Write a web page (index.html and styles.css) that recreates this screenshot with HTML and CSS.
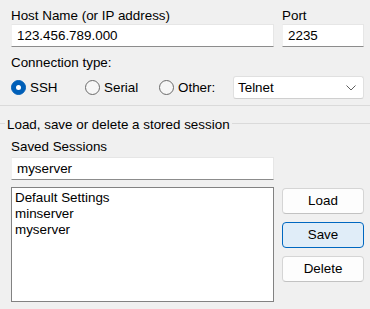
FILE: index.html
```html
<!DOCTYPE html>
<html>
<head>
<meta charset="utf-8">
<link rel="stylesheet" href="styles.css">
</head>
<body>
<div class="panel">
  <div class="dest">
    <div class="field">
      <div class="label">Host Name (or IP address)</div>
      <div class="input">123.456.789.000</div>
    </div>
    <div class="field">
      <div class="label">Port</div>
      <div class="input">2235</div>
    </div>
  </div>
  <div class="label conn-label">Connection type:</div>
  <div class="conn-row">
    <div class="radio-item"><span class="radio checked"></span><span>SSH</span></div>
    <div class="radio-item"><span class="radio"></span><span>Serial</span></div>
    <div class="radio-item other"><span class="radio"></span><span>Other:</span></div>
    <div class="select">
      <span>Telnet</span>
      <svg class="chev" width="10" height="6" viewBox="0 0 10 6"><polyline points="0.5,0.5 5,5 9.5,0.5" fill="none" stroke="#5f5f5f" stroke-width="1"/></svg>
    </div>
  </div>
</div>
<div class="sep"></div>
<div class="group-head">
  <span class="gline short"></span>
  <span class="gtext">Load, save or delete a stored session</span>
  <span class="gline long"></span>
</div>
<div class="panel sessions">
  <div class="label">Saved Sessions</div>
  <div class="input sess-input">myserver</div>
  <div class="sess-row">
    <div class="list">
      <div class="item">Default Settings</div>
      <div class="item">minserver</div>
      <div class="item">myserver</div>
    </div>
    <div class="buttons">
      <div class="btn">Load</div>
      <div class="btn primary">Save</div>
      <div class="btn">Delete</div>
    </div>
  </div>
</div>
</body>
</html>
```
FILE: styles.css
```css
html, body {
  margin: 0;
  padding: 0;
  background: #f0f0f0;
}
body {
  font-family: "Liberation Sans", Arial, sans-serif;
  font-size: 13.4px;
  line-height: 16px;
  color: #000;
  width: 370px;
  height: 309px;
  overflow: hidden;
}
.panel {
  padding: 8px 6px 0 11px;
}
.dest {
  display: grid;
  grid-template-columns: 263px 82px;
  column-gap: 8px;
}
.label {
  height: 16px;
  white-space: nowrap;
}
.input {
  box-sizing: border-box;
  height: 23px;
  background: #fff;
  border: 1px solid #e6e6e6;
  border-left-color: #f0f0f0;
  border-bottom-color: #8c8c8c;
  padding: 2px 5px;
  line-height: 17px;
  white-space: nowrap;
}
.conn-label {
  margin-top: 8px;
}
.conn-row {
  margin-top: 5px;
  display: flex;
  align-items: center;
  height: 23px;
}
.radio-item {
  display: flex;
  align-items: center;
  width: 74px;
  flex: none;
}
.radio {
  box-sizing: border-box;
  width: 15px;
  height: 15px;
  border-radius: 50%;
  border: 1px solid #6a6a6a;
  background: #f6f6f6;
  margin-right: 4px;
  flex: none;
  position: relative;
}
.radio.checked {
  background: #005fb8;
  border-color: #005fb8;
}
.radio.checked::after {
  content: "";
  position: absolute;
  left: 4px;
  top: 4px;
  width: 5px;
  height: 5px;
  border-radius: 50%;
  background: #fff;
}
.select {
  box-sizing: border-box;
  width: 131px;
  height: 23px;
  background: #fff;
  border: 1px solid #e0e0e0;
  border-bottom-color: #cfcfcf;
  border-radius: 3px;
  display: flex;
  align-items: center;
  justify-content: space-between;
  padding: 0 7px 0 4px;
}
.chev {
  display: block;
}
.sep {
  height: 1px;
  background: #dadada;
  margin-top: 6px;
}
.group-head {
  margin-top: 11px;
  display: flex;
  align-items: flex-start;
  height: 16px;
}
.gline {
  height: 1px;
  background: #dadada;
  margin-top: 6px;
}
.gline.short {
  width: 5px;
}
.gline.long {
  flex: 1;
  margin-left: 2px;
}
.gtext {
  margin-left: 2px;
  white-space: nowrap;
}
.sessions {
  padding-top: 6px;
}
.sess-input {
  width: 263px;
  margin-top: 2px;
}
.sess-row {
  margin-top: 7px;
  display: grid;
  grid-template-columns: 263px 82px;
  column-gap: 8px;
}
.list {
  box-sizing: border-box;
  height: 115px;
  background: #fff;
  border: 1px solid #828282;
  padding: 2px 3px;
}
.item {
  height: 16px;
  white-space: nowrap;
}
.buttons {
  padding-top: 1px;
  display: flex;
  flex-direction: column;
  gap: 8px;
}
.btn {
  box-sizing: border-box;
  height: 26px;
  border: 1px solid #d5d5d5;
  border-bottom-color: #c2c2c2;
  border-radius: 4px;
  background: #fdfdfd;
  display: flex;
  align-items: center;
  justify-content: center;
}
.btn.primary {
  background: #e0edf8;
  border: 1px solid #0067c0;
}
```
